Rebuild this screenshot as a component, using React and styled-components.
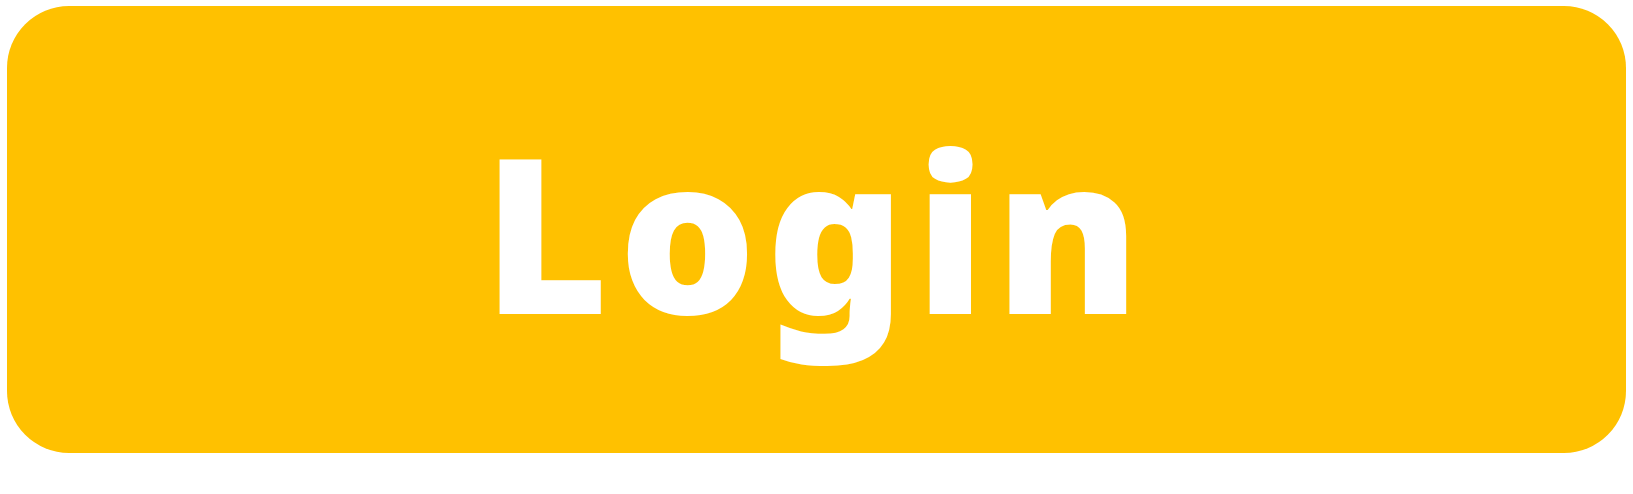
import styled, { createGlobalStyle } from 'styled-components';

const GlobalStyle = createGlobalStyle`
  html, body {
    margin: 0;
    padding: 0;
    background: #ffffff;
  }
`;

export default function App() {
  return (
    <>
      <GlobalStyle />
      <Page>
        <LoginButton type="button">Login</LoginButton>
      </Page>
    </>
  );
}

const Page = styled.div`
  display: flex;
  padding: 6px 7px 0;
  height: 494px;
  box-sizing: border-box;
`;

const LoginButton = styled.button`
  display: flex;
  align-items: center;
  justify-content: center;
  width: 1619px;
  height: 447px;
  padding: 0;
  border: none;
  border-radius: 62px;
  background: #ffc100;
  color: #ffffff;
  font-family: 'Noto Sans', sans-serif;
  font-weight: 900;
  font-size: 216px;
  letter-spacing: 10px;
  line-height: normal;
  cursor: pointer;
`;
